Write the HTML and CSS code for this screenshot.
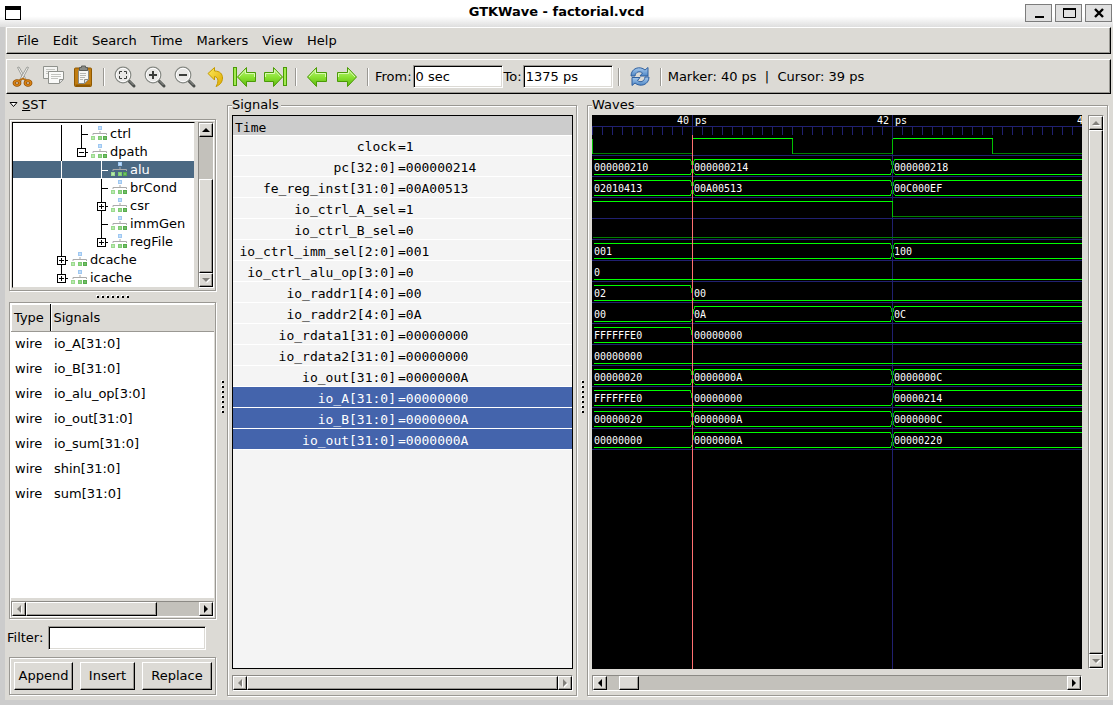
FILE: index.html
```html
<!DOCTYPE html>
<html lang="en">
<head>
<meta charset="utf-8">
<title>GTKWave - factorial.vcd</title>
<link rel="stylesheet" href="styles.css">
</head>
<body>
<svg class="defs" width="0" height="0" aria-hidden="true">
  <defs>
    <linearGradient id="leaf" x1="0" y1="0" x2="0" y2="1"><stop offset="0" stop-color="#c4f58a"/><stop offset=".5" stop-color="#8be234"/><stop offset="1" stop-color="#5cb80c"/></linearGradient>
    <linearGradient id="gold" x1="0" y1="0" x2="1" y2="1"><stop offset="0" stop-color="#fbe95a"/><stop offset="1" stop-color="#e0aa00"/></linearGradient>
    <linearGradient id="sky" x1="0" y1="0" x2="0" y2="1"><stop offset="0" stop-color="#a9cbee"/><stop offset="1" stop-color="#4f87c6"/></linearGradient>
    <symbol id="bar" viewBox="0 0 20 18"><path d="M10.500 0V18"/></symbol>
    <symbol id="tee" viewBox="0 0 20 18"><path d="M10.500 0V18M10 9.500H17"/></symbol>
    <symbol id="plus" viewBox="0 0 20 18"><path d="M10.500 0V18M15 9.500H17"/><rect x="6.500" y="5.500" width="8" height="8" fill="#fff"/><path d="M8 9.500H13M10.500 7V12"/></symbol>
    <symbol id="plus-end" viewBox="0 0 20 18"><path d="M10.500 0V6M15 9.500H17"/><rect x="6.500" y="5.500" width="8" height="8" fill="#fff"/><path d="M8 9.500H13M10.500 7V12"/></symbol>
    <symbol id="minus-end" viewBox="0 0 20 18"><path d="M10.500 0V6M15 9.500H17"/><rect x="6.500" y="5.500" width="8" height="8" fill="#fff"/><path d="M8 9.500H13"/></symbol>
    <symbol id="module" viewBox="0 0 17 16">
      <path d="M9 5V8M2 9V7.500H15.500V9" fill="none" stroke="#aaa" stroke-width="1"/>
      <rect x="7" y="0" width="4" height="4" fill="#9fc8f2"/><rect x="8" y="1" width="2" height="2" fill="#c2def9"/>
      <rect x="0" y="10" width="4" height="4" fill="#9bdb8e"/><rect x="1" y="11" width="2" height="2" fill="#b9e6b0"/>
      <rect x="7" y="10" width="4" height="4" fill="#7fcb73"/><rect x="12" y="10" width="4" height="4" fill="#57ab4d"/>
      <rect x="8" y="11" width="2" height="2" fill="#94d888"/><rect x="13" y="11" width="2" height="2" fill="#71c166"/>
    </symbol>
    <symbol id="lens" viewBox="0 0 24 24">
      <path d="M16 16L21 21" stroke="#4c4f4c" stroke-width="3" stroke-linecap="round"/><path d="M16.500 16L20.500 20" stroke="#9a9c98" stroke-width="1"/>
      <circle cx="10" cy="10" r="7.800" fill="#eeeeec" fill-opacity=".7" stroke="#858883" stroke-width="1.200"/><circle cx="10" cy="10" r="6.700" fill="none" stroke="#fff" stroke-width="1"/>
    </symbol>
    <symbol id="arrow" viewBox="0 0 24 24">
      <path d="M2.500 12L11.500 2.500V7.500H21.500V16.500H11.500V21.500Z" fill="url(#leaf)" stroke="#4a9a06" stroke-linejoin="round"/>
      <path d="M4 12L10.500 5V8.500H20.500V12" fill="none" stroke="#d8fab0"/>
    </symbol>
    <symbol id="skip" viewBox="0 0 24 24">
      <rect x=".5" y="2.500" width="3" height="18" fill="#a2ea50" stroke="#4a9a06"/>
      <path d="M4.500 12L13.500 2.500V7.500H22.500V16.500H13.500V21.500Z" fill="url(#leaf)" stroke="#4a9a06" stroke-linejoin="round"/>
      <path d="M6 12L12.500 5V8.500H21.500V12" fill="none" stroke="#d8fab0"/>
    </symbol>
    <symbol id="tri-left" viewBox="0 0 8 8"><path d="M6 0V8L2 4Z"/></symbol>
    <symbol id="tri-right" viewBox="0 0 8 8"><path d="M2 0V8L6 4Z"/></symbol>
    <symbol id="tri-up" viewBox="0 0 8 8"><path d="M0 6H8L4 2Z"/></symbol>
    <symbol id="tri-down" viewBox="0 0 8 8"><path d="M0 2H8L4 6Z"/></symbol>
    <!-- value change on a bus: both rails cross, fall, or rise -->
    <g id="cross"><path d="M-2 0L2 15M2 0L-2 15"/></g>
    <g id="fall"><path d="M-2 0L1 15"/></g>
    <g id="rise"><path d="M-1 15L2 0"/></g>
    <pattern id="ticks" width="10" height="8" patternUnits="userSpaceOnUse" y="12"><rect width="1" height="8" fill="#202070"/></pattern>
    <pattern id="rules" width="10" height="21" patternUnits="userSpaceOnUse" y="40"><rect width="10" height="1" fill="#202070"/></pattern>
  </defs>
</svg>

<div class="window">
  <header class="titlebar">
    <svg class="app-icon" width="16" height="14" aria-hidden="true"><rect x=".5" y=".5" width="15" height="13" fill="#fff" stroke="#000"/><path d="M0 2H16" stroke="#000" stroke-width="4"/></svg>
    <h1>GTKWave - factorial.vcd</h1>
    <div class="window-buttons">
      <button type="button" aria-label="Minimize"><svg width="16" height="14"><path d="M4 11H13" stroke="#000" stroke-width="2"/></svg></button>
      <button type="button" aria-label="Maximize"><svg width="16" height="14"><path d="M2.500 2V11.500H14.500V2" fill="none" stroke="#000"/><path d="M2 3H15" stroke="#000" stroke-width="2"/></svg></button>
      <button type="button" aria-label="Close"><svg width="16" height="14"><path d="M4 3L12 11M12 3L4 11" stroke="#000" stroke-width="2.400"/></svg></button>
    </div>
  </header>

  <nav class="menubar bar">
    <button type="button">File</button><button type="button">Edit</button><button type="button">Search</button><button type="button">Time</button><button type="button">Markers</button><button type="button">View</button><button type="button">Help</button>
  </nav>

  <div class="toolbar bar" role="toolbar">
    <button type="button" aria-label="Cut"><svg class="icon" viewBox="0 0 24 24">
      <path d="M6.500 2.500L8 2L15.500 15L14 16.500Z" fill="#f4f4f2" stroke="#8a8c87" stroke-width=".8"/><path d="M17.500 2.500L16 2L8.500 15L10 16.500Z" fill="#f4f4f2" stroke="#8a8c87" stroke-width=".8"/>
      <ellipse cx="6" cy="18" rx="2.900" ry="2.300" fill="none" stroke="#8f4d02" stroke-width="3"/><ellipse cx="6" cy="18" rx="2.900" ry="2.300" fill="none" stroke="#d98316" stroke-width="1.500"/>
      <ellipse cx="17" cy="18" rx="2.900" ry="2.300" fill="none" stroke="#8f4d02" stroke-width="3"/><ellipse cx="17" cy="18" rx="2.900" ry="2.300" fill="none" stroke="#d98316" stroke-width="1.500"/>
      <path d="M8 15.500L12 13.500L15.500 15.500" fill="none" stroke="#b96a08" stroke-width="1.600"/></svg></button>
    <button type="button" aria-label="Copy"><svg class="icon" viewBox="0 0 24 24">
      <path d="M2.500 1.500H16.500V13.500H2.500Z" fill="#f4f4f2" stroke="#8f918c"/><path d="M5 4.500H14M5 6.500H12M5 8.500H12" stroke="#c3c4c0"/>
      <path d="M7.500 6.500H22.500V14.500L18.500 18.500H7.500Z" fill="#fafaf9" stroke="#8f918c"/><path d="M22 14.500H18.500V18" fill="#ddd" stroke="#8f918c"/><path d="M10 9.500H20M10 11.500H20M10 13.500H17" stroke="#c3c4c0"/></svg></button>
    <button type="button" aria-label="Paste"><svg class="icon" viewBox="0 0 24 24">
      <rect x="3.500" y="3" width="17" height="18.500" rx="1" fill="#c17d11" stroke="#8f5902"/><path d="M4.500 20.500H19.500" stroke="#8f5902" stroke-width="2"/>
      <path d="M7.500 5.500H17.500V14.500L13.500 18.500H7.500Z" fill="#f6f6f4" stroke="#888a85"/><path d="M17 14.500H13.500V18" fill="#ddd" stroke="#888a85"/>
      <path d="M9 8.500H15M9 10.500H15M9 12.500H14M9 14.500H12" stroke="#b5b6b2"/>
      <path d="M8.500 2.500H10.500V1H14.500V2.500H16.500V5.500H8.500Z" fill="#888a85" stroke="#5c5e5a"/></svg></button>
    <span class="sep"></span>
    <button type="button" aria-label="Zoom fit"><svg class="icon"><use href="#lens"/><path d="M6.500 9V6.500H9M11 6.500H13.500V9M13.500 11V13.500H11M9 13.500H6.500V11" fill="none" stroke="#3c3e3b"/></svg></button>
    <button type="button" aria-label="Zoom in"><svg class="icon"><use href="#lens"/><path d="M6 10H14M10 6V14" stroke="#3c3e3b" stroke-width="2"/></svg></button>
    <button type="button" aria-label="Zoom out"><svg class="icon"><use href="#lens"/><path d="M6 10H14" stroke="#3c3e3b" stroke-width="2"/></svg></button>
    <button type="button" aria-label="Undo zoom"><svg class="icon" viewBox="0 0 24 24"><path d="M5 8.500L11.500 2.500V6C17 6 19.500 9 19.500 13C19.500 17 17 20 13 21.500C15.500 18 16 12 11.500 11.500V15Z" fill="url(#gold)" stroke="#c49a00" stroke-linejoin="round"/></svg></button>
    <button type="button" aria-label="Zoom to start"><svg class="icon"><use href="#skip"/></svg></button>
    <button type="button" aria-label="Zoom to end"><svg class="icon"><g transform="translate(24 0) scale(-1 1)"><use href="#skip"/></g></svg></button>
    <span class="sep"></span>
    <button type="button" aria-label="Previous edge"><svg class="icon"><use href="#arrow"/></svg></button>
    <button type="button" aria-label="Next edge"><svg class="icon"><g transform="translate(24 0) scale(-1 1)"><use href="#arrow"/></g></svg></button>
    <span class="sep"></span>
    <label for="from">From:</label><input id="from" type="text" value="0 sec">
    <label for="to">To:</label><input id="to" type="text" value="1375 ps">
    <span class="sep"></span>
    <button type="button" aria-label="Reload"><svg class="icon" viewBox="0 0 24 24">
      <path d="M3 11C3 3 12 .5 17 5L20 2.500V11H12L14.500 8C11.500 5.500 7.500 7 7 11Z" fill="url(#sky)" stroke="#2f5f9e" stroke-linejoin="round"/>
      <path d="M21 12C21 20 12 22.500 7 18L4 20.500V12.500H12L9.500 15.500C12.500 18 16.500 16.500 17 12Z" fill="url(#sky)" stroke="#2f5f9e" stroke-linejoin="round"/></svg></button>
    <span class="sep"></span>
    <output class="status">Marker: 40 ps  |  Cursor: 39 ps</output>
  </div>

  <main class="panes">
    <section class="sst">
      <button type="button" class="expander"><svg width="9" height="8" aria-hidden="true"><path d="M1 1.500H8L4.500 5.500Z" fill="#fff" stroke="#000"/></svg><span><u>S</u>ST</span></button>

      <div class="etched tree-frame">
        <ul class="tree">
          <li><svg class="guide"><use href="#bar"/></svg><svg class="guide"><use href="#tee"/></svg><svg class="node"><use href="#module"/></svg>ctrl</li>
          <li><svg class="guide"><use href="#bar"/></svg><svg class="guide"><use href="#minus-end"/></svg><svg class="node"><use href="#module"/></svg>dpath</li>
          <li class="selected"><svg class="guide"><use href="#bar"/></svg><svg class="guide"></svg><svg class="guide"><use href="#tee"/></svg><svg class="node"><use href="#module"/></svg>alu</li>
          <li><svg class="guide"><use href="#bar"/></svg><svg class="guide"></svg><svg class="guide"><use href="#tee"/></svg><svg class="node"><use href="#module"/></svg>brCond</li>
          <li><svg class="guide"><use href="#bar"/></svg><svg class="guide"></svg><svg class="guide"><use href="#plus"/></svg><svg class="node"><use href="#module"/></svg>csr</li>
          <li><svg class="guide"><use href="#bar"/></svg><svg class="guide"></svg><svg class="guide"><use href="#tee"/></svg><svg class="node"><use href="#module"/></svg>immGen</li>
          <li><svg class="guide"><use href="#bar"/></svg><svg class="guide"></svg><svg class="guide"><use href="#plus-end"/></svg><svg class="node"><use href="#module"/></svg>regFile</li>
          <li><svg class="guide"><use href="#plus"/></svg><svg class="node"><use href="#module"/></svg>dcache</li>
          <li><svg class="guide"><use href="#plus-end"/></svg><svg class="node"><use href="#module"/></svg>icache</li>
        </ul>
        <div class="scroll vertical">
          <button type="button" aria-label="Scroll up"><svg><use href="#tri-up"/></svg></button>
          <span class="track tree-track"></span><span class="thumb"></span>
          <button type="button" aria-label="Scroll down" disabled><svg><use href="#tri-down"/></svg></button>
        </div>
      </div>

      <svg class="grip-h" width="34" height="3" aria-hidden="true"><path d="M0 1H34" stroke="#fff" stroke-width="2" stroke-dasharray="2 3"/><path d="M1 2H34" stroke="#000" stroke-width="2" stroke-dasharray="2 3"/></svg>

      <div class="etched facs">
        <div class="facs-list">
          <table>
            <thead><tr><th>Type</th><th>Signals</th></tr></thead>
            <tbody>
              <tr><td>wire</td><td>io_A[31:0]</td></tr>
              <tr><td>wire</td><td>io_B[31:0]</td></tr>
              <tr><td>wire</td><td>io_alu_op[3:0]</td></tr>
              <tr><td>wire</td><td>io_out[31:0]</td></tr>
              <tr><td>wire</td><td>io_sum[31:0]</td></tr>
              <tr><td>wire</td><td>shin[31:0]</td></tr>
              <tr><td>wire</td><td>sum[31:0]</td></tr>
            </tbody>
          </table>
        </div>
        <div class="scroll">
          <button type="button" aria-label="Scroll left" disabled><svg><use href="#tri-left"/></svg></button>
          <span class="thumb"></span><span class="track facs-track"></span>
          <button type="button" aria-label="Scroll right"><svg><use href="#tri-right"/></svg></button>
        </div>
      </div>

      <div class="filter"><label for="filter">Filter:</label><input id="filter" type="text"></div>

      <div class="etched actions">
        <button type="button">Append</button><button type="button">Insert</button><button type="button">Replace</button>
      </div>
    </section>

    <div class="splitter"><svg width="3" height="34" aria-hidden="true"><path d="M1 0V34" stroke="#fff" stroke-width="2" stroke-dasharray="2 3"/><path d="M2 1V34" stroke="#000" stroke-width="2" stroke-dasharray="2 3"/></svg></div>

    <fieldset class="signals">
      <legend>Signals</legend>
      <div class="signal-list">
        <div class="time">Time</div>
        <ul>
          <li><span>clock</span><span>=1</span></li>
          <li><span>pc[32:0]</span><span>=000000214</span></li>
          <li><span>fe_reg_inst[31:0]</span><span>=00A00513</span></li>
          <li><span>io_ctrl_A_sel</span><span>=1</span></li>
          <li><span>io_ctrl_B_sel</span><span>=0</span></li>
          <li><span>io_ctrl_imm_sel[2:0]</span><span>=001</span></li>
          <li><span>io_ctrl_alu_op[3:0]</span><span>=0</span></li>
          <li><span>io_raddr1[4:0]</span><span>=00</span></li>
          <li><span>io_raddr2[4:0]</span><span>=0A</span></li>
          <li><span>io_rdata1[31:0]</span><span>=00000000</span></li>
          <li><span>io_rdata2[31:0]</span><span>=00000000</span></li>
          <li><span>io_out[31:0]</span><span>=0000000A</span></li>
          <li class="selected"><span>io_A[31:0]</span><span>=00000000</span></li>
          <li class="selected"><span>io_B[31:0]</span><span>=0000000A</span></li>
          <li class="selected"><span>io_out[31:0]</span><span>=0000000A</span></li>
        </ul>
      </div>
      <div class="scroll">
        <button type="button" aria-label="Scroll left" disabled><svg><use href="#tri-left"/></svg></button>
        <span class="thumb"></span>
        <button type="button" aria-label="Scroll right" disabled><svg><use href="#tri-right"/></svg></button>
      </div>
    </fieldset>

    <div class="splitter"><svg width="3" height="34" aria-hidden="true"><path d="M1 0V34" stroke="#fff" stroke-width="2" stroke-dasharray="2 3"/><path d="M2 1V34" stroke="#000" stroke-width="2" stroke-dasharray="2 3"/></svg></div>

    <fieldset class="waves">
      <legend>Waves</legend>
      <div class="wave-grid">
        <div class="canvas">
          <svg width="100%" height="100%">
            <rect y="12" width="100%" height="8" fill="url(#ticks)"/>
            <rect y="11" width="100%" height="1" fill="#202070"/>
            <rect y="40" width="100%" height="295" fill="url(#rules)"/>
            <rect x="100" width="1" height="100%" fill="#202070"/>
            <rect x="300" width="1" height="100%" fill="#202070"/>
            <rect x="500" width="1" height="100%" fill="#202070"/>
            <g class="traces" transform="translate(.5 .5)">
              <g transform="translate(0 23)"><path class="low" d="M0 15H100M200 15H300M400 15H2000"/><path class="edge" d="M0 0V15M100 0V15M200 0V15M300 0V15M400 0V15"/><path d="M100 0H200M300 0H400"/></g>
              <g transform="translate(0 44)"><path d="M1 0H98M1 15H98M102 0H298M102 15H298M302 0H2000M302 15H2000"/><use class="edge" href="#cross" x="100"/><use class="edge" href="#cross" x="300"/></g>
              <g transform="translate(0 65)"><path d="M1 0H98M1 15H98M102 0H298M102 15H298M302 0H2000M302 15H2000"/><use class="edge" href="#cross" x="100"/><use class="edge" href="#cross" x="300"/></g>
              <g transform="translate(0 86)"><path class="low" d="M300 15H2000"/><path class="edge" d="M300 0V15"/><path d="M0 0H300"/></g>
              <g transform="translate(0 107)"><path class="low" d="M0 15H2000"/></g>
              <g transform="translate(0 128)"><path d="M1 0H298M1 15H298M302 0H2000M302 15H2000"/><use class="edge" href="#cross" x="300"/></g>
              <g transform="translate(0 149)"><path d="M1 15H2000"/></g>
              <g transform="translate(0 170)"><path d="M1 0H98M1 15H2000"/><use class="edge" href="#fall" x="100"/></g>
              <g transform="translate(0 191)"><path d="M1 15H98M102 0H298M102 15H298M302 0H2000M302 15H2000"/><use class="edge" href="#rise" x="100"/><use class="edge" href="#cross" x="300"/></g>
              <g transform="translate(0 212)"><path d="M1 0H98M1 15H2000"/><use class="edge" href="#fall" x="100"/></g>
              <g transform="translate(0 233)"><path d="M1 15H2000"/></g>
              <g transform="translate(0 254)"><path d="M1 0H98M1 15H98M102 0H298M102 15H298M302 0H2000M302 15H2000"/><use class="edge" href="#cross" x="100"/><use class="edge" href="#cross" x="300"/></g>
              <g transform="translate(0 275)"><path d="M1 0H98M1 15H298M302 0H2000M302 15H2000"/><use class="edge" href="#fall" x="100"/><use class="edge" href="#rise" x="300"/></g>
              <g transform="translate(0 296)"><path d="M1 0H98M1 15H98M102 0H298M102 15H298M302 0H2000M302 15H2000"/><use class="edge" href="#cross" x="100"/><use class="edge" href="#cross" x="300"/></g>
              <g transform="translate(0 317)"><path d="M1 15H98M102 0H298M102 15H298M302 0H2000M302 15H2000"/><use class="edge" href="#rise" x="100"/><use class="edge" href="#cross" x="300"/></g>
            </g>
            <rect x="100" y="20" width="1" height="100%" fill="#ff7070"/>
            <g class="values">
              <text x="85" y="9">40 ps</text><text x="285" y="9">42 ps</text><text x="485" y="9">44 ps</text>
              <text x="2" y="56">000000210</text><text x="102" y="56">000000214</text><text x="302" y="56">000000218</text>
              <text x="2" y="77">02010413</text><text x="102" y="77">00A00513</text><text x="302" y="77">00C000EF</text>
              <text x="2" y="140">001</text><text x="302" y="140">100</text>
              <text x="2" y="161">0</text>
              <text x="2" y="182">02</text><text x="102" y="182">00</text>
              <text x="2" y="203">00</text><text x="102" y="203">0A</text><text x="302" y="203">0C</text>
              <text x="2" y="224">FFFFFFE0</text><text x="102" y="224">00000000</text>
              <text x="2" y="245">00000000</text>
              <text x="2" y="266">00000020</text><text x="102" y="266">0000000A</text><text x="302" y="266">0000000C</text>
              <text x="2" y="287">FFFFFFE0</text><text x="102" y="287">00000000</text><text x="302" y="287">00000214</text>
              <text x="2" y="308">00000020</text><text x="102" y="308">0000000A</text><text x="302" y="308">0000000C</text>
              <text x="2" y="329">00000000</text><text x="102" y="329">0000000A</text><text x="302" y="329">00000220</text>
            </g>
          </svg>
        </div>
        <div class="scroll vertical">
          <button type="button" aria-label="Scroll up" disabled><svg><use href="#tri-up"/></svg></button>
          <span class="thumb"></span>
          <button type="button" aria-label="Scroll down" disabled><svg><use href="#tri-down"/></svg></button>
        </div>
        <div class="scroll">
          <button type="button" aria-label="Scroll left"><svg><use href="#tri-left"/></svg></button>
          <span class="track lead"></span><span class="thumb short"></span><span class="track rest"></span>
          <button type="button" aria-label="Scroll right"><svg><use href="#tri-right"/></svg></button>
        </div>
      </div>
    </fieldset>
  </main>
</div>
</body>
</html>
```
FILE: styles.css
```css
* { box-sizing: border-box; }

body {
  margin: 0;
  background: #ccc;
  color: #000;
  font: 13px/16px "DejaVu Sans", sans-serif;
}

button, input {
  margin: 0;
  padding: 0;
  border: 0;
  border-radius: 0;
  background: none;
  color: inherit;
  font: inherit;
}

svg { display: block; flex: none; }
ul { margin: 0; padding: 0; list-style: none; }
.defs { position: absolute; }

.window {
  display: flex;
  flex-direction: column;
  height: 100vh;
  border-bottom: 5px solid #ccc;
  background: linear-gradient(90deg, #ccc 5px, #dcdad5 5px);
}

/* title bar */
.titlebar {
  display: flex;
  align-items: center;
  height: 27px;
  flex: none;
  padding: 0 1px 1px 5px;
  background: linear-gradient(#fff 60%, #dedede);
}
.titlebar h1 { flex: 1; margin: 0; padding: 0 0 2px 67px; font-size: 13px; line-height: 16px; text-align: center; }
.window-buttons { display: flex; gap: 3px; }
.window-buttons button {
  display: grid;
  place-items: center;
  width: 27px;
  height: 18px;
  border: 1px solid #7c7c7c;
  background: #e0e0e0;
}

/* menu and tool bars */
.bar {
  display: flex;
  align-items: center;
  flex: none;
  margin: 0 2px 0 6px;
  border: 1px solid;
  border-color: #fff #000 #000 #fff;
  background: #dcdad5;
  box-shadow: inset -1px -1px #9a9893;
}
.menubar { height: 27px; padding-left: 3px; }
.menubar button { padding: 0 7px; }
.toolbar { height: 35px; margin-top: 5px; padding-left: 1px; }
.toolbar button { display: grid; place-items: center; width: 30px; height: 30px; }
.toolbar input { width: 90px; height: 23px; }
.toolbar label { padding: 0 1px; }
.icon { width: 24px; height: 24px; }
.sep { width: 2px; height: 18px; margin: 0 5px; border-left: 1px solid #9a9893; border-right: 1px solid #fff; }
.status { padding-left: 1px; white-space: pre; }

input {
  border: 1px solid;
  border-color: #9a9893 #fff #fff #9a9893;
  background: #fff;
  box-shadow: inset 1px 1px #000, inset -1px -1px #dcdad5;
  padding: 0 2px;
}

/* panes */
.panes { display: flex; flex: 1; min-height: 0; padding: 0 5px 4px 9px; }
.splitter { display: grid; place-items: center; flex: none; width: 10px; padding-top: 4px; }

.etched, fieldset {
  border: 1px solid #9a9893;
  box-shadow: inset 1px 1px #fff, 1px 1px #fff;
}

.sst { display: flex; flex-direction: column; flex: none; width: 207px; margin-right: 1px; padding-bottom: 1px; }
.expander { display: flex; align-items: center; gap: 4px; height: 22px; margin-bottom: 3px; }

.tree-frame { display: flex; justify-content: space-between; flex: none; height: 172px; padding: 2px 1px 2px 2px; }
.tree { flex: 1; margin-right: 3px; padding-top: 1px; overflow: hidden; background: #fff; border: 1px solid; border-color: #000 #dcdad5 #dcdad5 #000; }
.tree li {
  display: flex;
  align-items: center;
  height: 18px;
  padding-left: 38px;
  border-top: 1px solid transparent;
  background-clip: padding-box;
  white-space: nowrap;
}
.tree .selected { background-color: #4b6983; color: #fff; }
.guide { width: 20px; height: 18px; fill: none; stroke: #000; }
.selected .guide { stroke: #fff; }
.node { width: 17px; height: 16px; margin-right: 2px; }

.grip-h { margin: 4px auto; }

.facs { display: flex; flex-direction: column; flex: 1; min-height: 0; padding: 1px; }
.facs-list { flex: 1; min-height: 0; margin-bottom: 3px; overflow: hidden; background: #fff; }
table { width: 100%; border-collapse: collapse; }
th {
  height: 27px;
  padding: 1px 3px 0;
  background: #dcdad5;
  border-right: 1px solid #000;
  border-bottom: 1px solid #9a9893;
  font-weight: normal;
  text-align: left;
  box-shadow: inset 1px 1px #fff;
}
th:last-child { border-right: 0; }
th:first-child { width: 39px; }
td { height: 25px; padding: 0 4px; }

.filter { display: flex; align-items: center; flex: none; margin: 7px 10px 7px 0; }
.filter label { margin: 0 5px 0 -2px; }
.filter input { flex: 1; min-width: 0; height: 24px; }

.actions { display: grid; grid-template-columns: 59fr 55fr 70fr; gap: 7px; flex: none; padding: 4px 3px 4px 4px; }
.actions button {
  height: 28px;
  border: 1px solid;
  border-color: #fff #000 #000 #fff;
  box-shadow: inset -1px -1px #9a9893;
}

/* scroll bars */
.scroll {
  display: flex;
  flex: none;
  height: 16px;
  border: 1px solid;
  border-color: #8c8a85 #fff #fff #8c8a85;
  background: #c3c1bb;
}
.scroll.vertical { flex-direction: column; width: 16px; height: auto; }
.scroll button { display: grid; place-items: center; flex: none; width: 14px; height: 14px; }
.scroll button, .thumb {
  border: 1px solid;
  border-color: #fff #000 #000 #fff;
  background: #dcdad5;
  box-shadow: inset -1px -1px #9a9893;
}
.scroll svg { width: 8px; height: 8px; fill: #000; }
.scroll button:disabled svg { fill: #83817c; filter: drop-shadow(1px 1px #fff); }
.thumb { flex: 1; }
.tree-track { height: 42px; }
.facs-track { width: 42px; }
.lead { width: 12px; }
.thumb.short { flex: none; width: 20px; }
.rest { flex: 1; }

/* framed panes */
fieldset { display: flex; flex-direction: column; min-width: 0; margin: 3px 0 0; padding: 2px 3px 4px 4px; }
legend { padding: 0 2px 0 0; background: #dcdad5; }

.signals { flex: none; width: 350px; }
.signal-list {
  flex: 1;
  min-height: 0;
  margin-bottom: 6px;
  overflow: hidden;
  border: 1px solid #000;
  background: #f4f4f4;
  font: 13px/22px "DejaVu Sans Mono", monospace;
}
.time { height: 20px; padding: 1px 2px 0; background: #ccc; border-bottom: 1px solid #fff; }
.signal-list li { display: grid; grid-template-columns: 163px 1fr; column-gap: 2px; height: 21px; border-bottom: 1px solid #fff; line-height: 23px; white-space: pre; }
.signal-list li:first-child { height: 20px; line-height: 22px; }
.signal-list li span:first-child { text-align: right; }
.signal-list .selected { background: #4464ac; color: #fff; }

.waves { flex: 1; }
.wave-grid { display: grid; flex: 1; min-height: 0; grid-template: minmax(0, 1fr) 16px / minmax(0, 1fr) 16px; gap: 6px; }
.canvas { min-height: 0; overflow: hidden; background: #000; }
.traces { fill: none; stroke: #00ff00; stroke-width: 1; shape-rendering: crispEdges; }
.low { stroke: #008000; }
.edge { stroke: #00c000; }
.values { fill: #fff; font: 10px "DejaVu Sans Mono", monospace; }
```
